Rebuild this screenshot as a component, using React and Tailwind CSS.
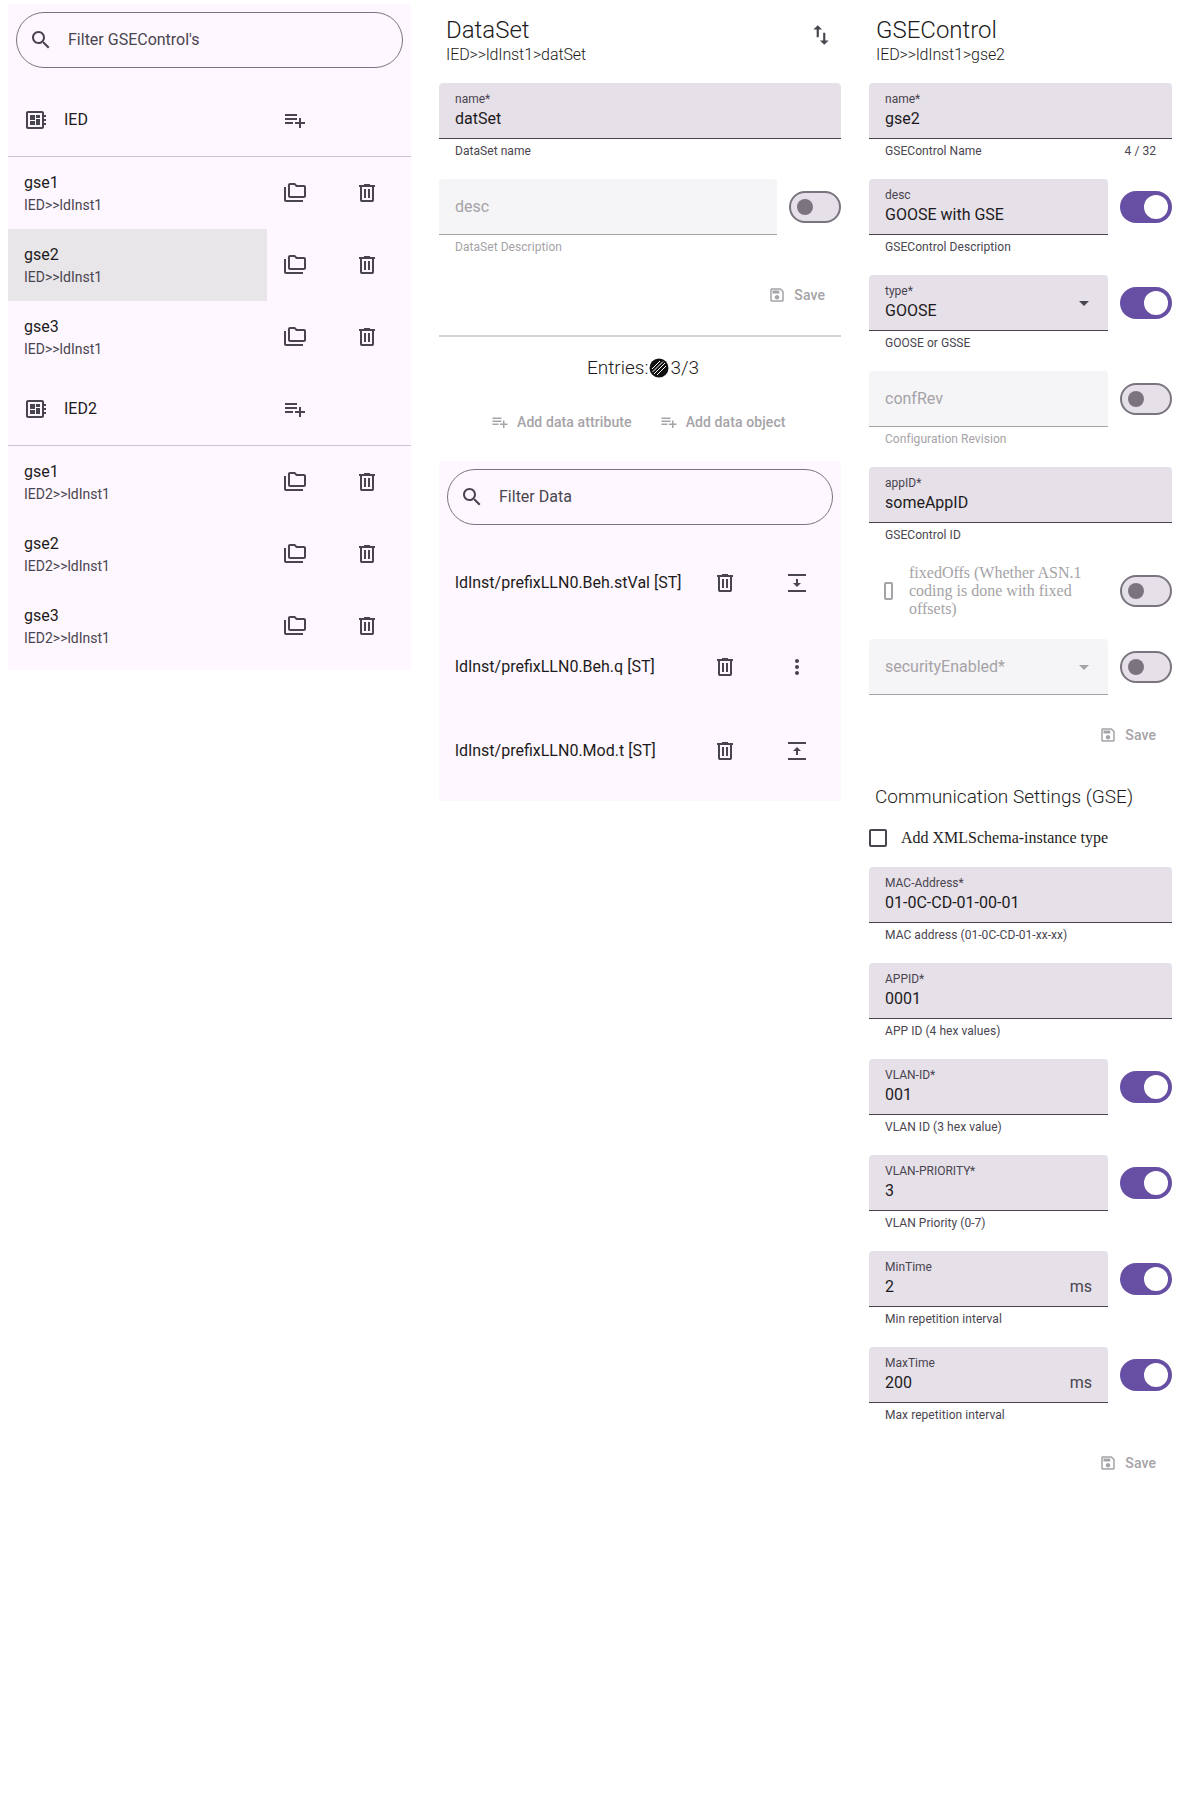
const Icon = ({ d, size = 24, className = "" }) => (
  <svg width={size} height={size} viewBox="0 0 24 24" fill="currentColor" className={`shrink-0 ${className}`}>
    <path d={d} />
  </svg>
);

const icons = {
  search: "M15.5 14h-.79l-.28-.27C15.41 12.59 16 11.11 16 9.5 16 5.91 13.09 3 9.5 3S3 5.91 3 9.5 5.91 16 9.5 16c1.61 0 3.09-.59 4.23-1.57l.27.28v.79l5 4.99L20.49 19l-4.99-5zm-6 0C7.01 14 5 11.99 5 9.5S7.01 5 9.5 5 14 7.01 14 9.5 11.99 14 9.5 14z",
  playlist: "M14 10H2v2h12v-2zm0-4H2v2h12V6zm4 8v-4h-2v4h-4v2h4v4h2v-4h4v-2h-4zM2 16h8v-2H2v2z",
  folder: "M3 19h17v2H3c-1.1 0-2-.9-2-2V6h2v13zM23 6v9c0 1.1-.9 2-2 2H7c-1.1 0-2-.9-2-2L5.01 4C5.01 2.9 5.9 2 7 2h5l2 2h7c1.1 0 2 .9 2 2zM7 15h14V6h-7.83l-2-2H7v11z",
  trash: "M7 21q-.825 0-1.413-.587T5 19V6H4V4h5V3h6v1h5v2h-1v13q0 .825-.587 1.413T17 21H7ZM17 6H7v13h10V6ZM9 17h2V8H9v9Zm4 0h2V8h-2v9Z",
  board: "M22 9V7h-2V5c0-1.1-.9-2-2-2H4c-1.1 0-2 .9-2 2v14c0 1.1.9 2 2 2h14c1.1 0 2-.9 2-2v-2h2v-2h-2v-2h2v-2h-2V9h2zm-4 10H4V5h14v14zM6 13h5v4H6v-4zm6-6h4v3h-4V7zM6 7h5v5H6V7zm6 4h4v6h-4v-6z",
  swap: "M16 17.01V10h-2v7.01h-3L15 21l4-3.99h-3zM9 3L5 6.99h3V14h2V6.99h3L9 3z",
  save: "M17 3H5c-1.11 0-2 .9-2 2v14c0 1.1.89 2 2 2h14c1.1 0 2-.9 2-2V7l-4-4zm2 16H5V5h11.17L19 7.83V19zm-7-7c-1.66 0-3 1.34-3 3s1.34 3 3 3 3-1.34 3-3-1.34-3-3-3zM6 6h9v4H6z",
  moveDown: "M3 3h18v2H3zM3 19h18v2H3zM11 8h2v4h3l-4 4-4-4h3z",
  moveUp: "M3 3h18v2H3zM3 19h18v2H3zM11 16h2v-4h3l-4-4-4 4h3z",
  more: "M12 8c1.1 0 2-.9 2-2s-.9-2-2-2-2 .9-2 2 .9 2 2 2zm0 2c-1.1 0-2 .9-2 2s.9 2 2 2 2-.9 2-2-.9-2-2-2zm0 6c-1.1 0-2 .9-2 2s.9 2 2 2 2-.9 2-2-.9-2-2-2z",
  drop: "M7 10l5 5 5-5z",
};

const Toggle = ({ on }) =>
  on ? (
    <div className="w-[52px] h-8 rounded-full bg-[#6750a4] flex items-center justify-end pr-1 shrink-0">
      <div className="w-6 h-6 rounded-full bg-white" />
    </div>
  ) : (
    <div className="w-[52px] h-8 rounded-full bg-[#e6e0e9] border-2 border-[#79747e] flex items-center pl-1.5 shrink-0">
      <div className="w-4 h-4 rounded-full bg-[#79747e]" />
    </div>
  );

const Field = ({ label, value, helper, counter, toggle, select, suffix, disabled }) => (
  <div className={`flex items-start gap-3 ${helper ? "h-[96px]" : "h-[76px]"}`}>
    <div className="flex-1 min-w-0">
      <div
        className={`h-14 rounded-t px-4 flex items-center justify-between border-b ${
          disabled ? "bg-[#f5f4f6] border-[#a5a3a7]" : "bg-[#e6e0e9] border-[#49454f]"
        }`}
      >
        {value ? (
          <div className="flex flex-col">
            <span className="text-xs leading-4 text-[#49454f]">{label}</span>
            <span className="text-base leading-6 text-[#1d1b20]">{value}</span>
          </div>
        ) : (
          <span className="text-base text-[#a5a3a7]">{label}</span>
        )}
        {suffix && <span className="text-base text-[#49454f] mt-4">{suffix}</span>}
        {select && (
          <Icon d={icons.drop} className={`-mr-1 ${disabled ? "text-[#a5a3a7]" : "text-[#49454f]"}`} />
        )}
      </div>
      {helper && (
        <div
          className={`px-4 mt-1 flex justify-between text-xs leading-4 tracking-[0.05px] ${
            disabled ? "text-[#a5a3a7]" : "text-[#49454f]"
          }`}
        >
          <span>{helper}</span>
          {counter && <span>{counter}</span>}
        </div>
      )}
    </div>
    {toggle && (
      <div className="h-14 flex items-center">
        <Toggle on={toggle === "on"} />
      </div>
    )}
  </div>
);

const SearchBar = ({ text }) => (
  <div className="h-14 rounded-full border border-[#79747e] flex items-center pl-3 gap-[15px] text-[#49454f]">
    <Icon d={icons.search} />
    <span className="text-base">{text}</span>
  </div>
);

const SaveButton = () => (
  <div className="h-10 flex items-center justify-end gap-2 pr-4 text-[#a5a3a7]">
    <Icon d={icons.save} size={18} />
    <span className="text-sm font-medium tracking-[0.1px]">Save</span>
  </div>
);

const Heading = ({ title, path }) => (
  <div className="h-[83px] pl-[7px] pt-[15px] text-[#1d1b20] font-light">
    <div className="text-2xl leading-[30px]">{title}</div>
    <div className="text-base leading-5 tracking-[-0.1px]">{path}</div>
  </div>
);

const IedHeader = ({ name }) => (
  <div className="h-[73px] flex items-center border-b border-[#cac4d0] text-[#49454f]">
    <Icon d={icons.board} className="ml-4" />
    <span className="ml-4 w-[219px] text-base text-[#1d1b20]">{name}</span>
    <Icon d={icons.playlist} />
  </div>
);

const ControlRow = ({ name, path, selected }) => (
  <div className="h-[72px] flex items-center text-[#49454f]">
    <div className={`w-[259px] h-full pl-4 flex flex-col justify-center ${selected ? "bg-[#e9e6ea]" : ""}`}>
      <span className="text-base leading-6 text-[#1d1b20]">{name}</span>
      <span className="text-sm leading-5">{path}</span>
    </div>
    <Icon d={icons.folder} className="ml-4" />
    <Icon d={icons.trash} className="ml-12" />
  </div>
);

const EntryRow = ({ text, action }) => (
  <div className="h-[84px] flex items-center pl-4 text-[#49454f]">
    <span className="w-[258px] text-base text-[#1d1b20]">{text}</span>
    <Icon d={icons.trash} />
    <Icon d={action} className="ml-12" />
  </div>
);

const Hatched = () => (
  <svg width="20" height="20" viewBox="0 0 20 20" className="shrink-0 mx-px">
    <circle cx="10" cy="10" r="9.5" fill="#111" />
    <g stroke="#fff" strokeWidth="1">
      <line x1="3" y1="11" x2="11" y2="3" />
      <line x1="3.5" y1="14" x2="14" y2="3.5" />
      <line x1="5" y1="16" x2="16" y2="5" />
      <line x1="8" y1="17" x2="17" y2="8" />
    </g>
  </svg>
);

const AddButton = ({ label }) => (
  <div className="flex items-center gap-2 text-[#a5a3a7]">
    <Icon d={icons.playlist} size={18} />
    <span className="text-sm font-medium tracking-[0.1px]">{label}</span>
  </div>
);

const groups = [
  { ied: "IED", path: "IED>>ldInst1" },
  { ied: "IED2", path: "IED2>>ldInst1" },
];

export default function App() {
  return (
    <div className="h-[1816px] bg-white flex items-start gap-7 pl-2 pt-1 font-['Roboto',sans-serif]">
      {/* left list */}
      <div className="w-[403px] bg-[#fef7ff] pt-2 pb-2">
        <div className="px-2 mb-4">
          <SearchBar text="Filter GSEControl's" />
        </div>
        {groups.map((g) => (
          <div key={g.ied}>
            <IedHeader name={g.ied} />
            {["gse1", "gse2", "gse3"].map((n) => (
              <ControlRow key={n} name={n} path={g.path} selected={g.ied === "IED" && n === "gse2"} />
            ))}
          </div>
        ))}
      </div>

      {/* data set */}
      <div className="w-[402px] -mt-1">
        <div className="relative">
          <Heading title="DataSet" path="IED>>ldInst1>datSet" />
          <Icon d={icons.swap} size={26} className="absolute right-[7px] top-[22px] text-[#49454f]" />
        </div>
        <Field label="name*" value="datSet" helper="DataSet name" />
        <Field label="desc" helper="DataSet Description" toggle="off" disabled />
        <SaveButton />
        <div className="h-[2px] bg-[#d3d3d3] mt-5" />
        <div className="h-[62px] flex items-center justify-center pl-[6px] text-[19px] font-light text-[#1d1b20]">
          <span>Entries:</span>
          <Hatched />
          <span>3/3</span>
        </div>
        <div className="h-[45px] flex items-center pl-[52px] gap-7">
          <AddButton label="Add data attribute" />
          <AddButton label="Add data object" />
        </div>
        <div className="mt-[17px] bg-[#fef7ff] pt-2 pb-2 h-[340px]">
          <div className="px-2 mb-4">
            <SearchBar text="Filter Data" />
          </div>
          <EntryRow text="ldInst/prefixLLN0.Beh.stVal [ST]" action={icons.moveDown} />
          <EntryRow text="ldInst/prefixLLN0.Beh.q [ST]" action={icons.more} />
          <EntryRow text="ldInst/prefixLLN0.Mod.t [ST]" action={icons.moveUp} />
        </div>
      </div>

      {/* gse control */}
      <div className="w-[303px] -mt-1">
        <Heading title="GSEControl" path="IED>>ldInst1>gse2" />
        <Field label="name*" value="gse2" helper="GSEControl Name" counter="4 / 32" />
        <Field label="desc" value="GOOSE with GSE" helper="GSEControl Description" toggle="on" />
        <Field label="type*" value="GOOSE" helper="GOOSE or GSSE" toggle="on" select />
        <Field label="confRev" helper="Configuration Revision" toggle="off" disabled />
        <Field label="appID*" value="someAppID" helper="GSEControl ID" />
        <div className="h-[76px] flex items-start gap-3">
          <div className="flex-1 h-14 flex items-center pl-[15px]">
            <div className="w-[9px] h-[18px] rounded-[2px] border-2 border-[#a5a3a7] shrink-0" />
            <span className="ml-4 font-['Liberation_Serif',serif] text-base leading-[18px] text-[#a5a3a7]">
              fixedOffs (Whether ASN.1 coding is done with fixed offsets)
            </span>
          </div>
          <div className="h-14 flex items-center">
            <Toggle />
          </div>
        </div>
        <Field label="securityEnabled*" toggle="off" select disabled />
        <SaveButton />
        <div className="h-[61px] flex items-end pl-[6px] pb-[5px] text-[19px] font-light text-[#1d1b20]">
          Communication Settings (GSE)
        </div>
        <div className="mt-[10px] h-[41px] flex items-start">
          <div className="mt-[3px] w-[18px] h-[18px] rounded-[2px] border-2 border-[#49454f] shrink-0" />
          <span className="ml-[14px] font-['Liberation_Serif',serif] text-base leading-6 text-[#1d1b20]">
            Add XMLSchema-instance type
          </span>
        </div>
        <Field label="MAC-Address*" value="01-0C-CD-01-00-01" helper="MAC address (01-0C-CD-01-xx-xx)" />
        <Field label="APPID*" value="0001" helper="APP ID (4 hex values)" />
        <Field label="VLAN-ID*" value="001" helper="VLAN ID (3 hex value)" toggle="on" />
        <Field label="VLAN-PRIORITY*" value="3" helper="VLAN Priority (0-7)" toggle="on" />
        <Field label="MinTime" value="2" helper="Min repetition interval" toggle="on" suffix="ms" />
        <Field label="MaxTime" value="200" helper="Max repetition interval" toggle="on" suffix="ms" />
        <SaveButton />
      </div>
    </div>
  );
}
